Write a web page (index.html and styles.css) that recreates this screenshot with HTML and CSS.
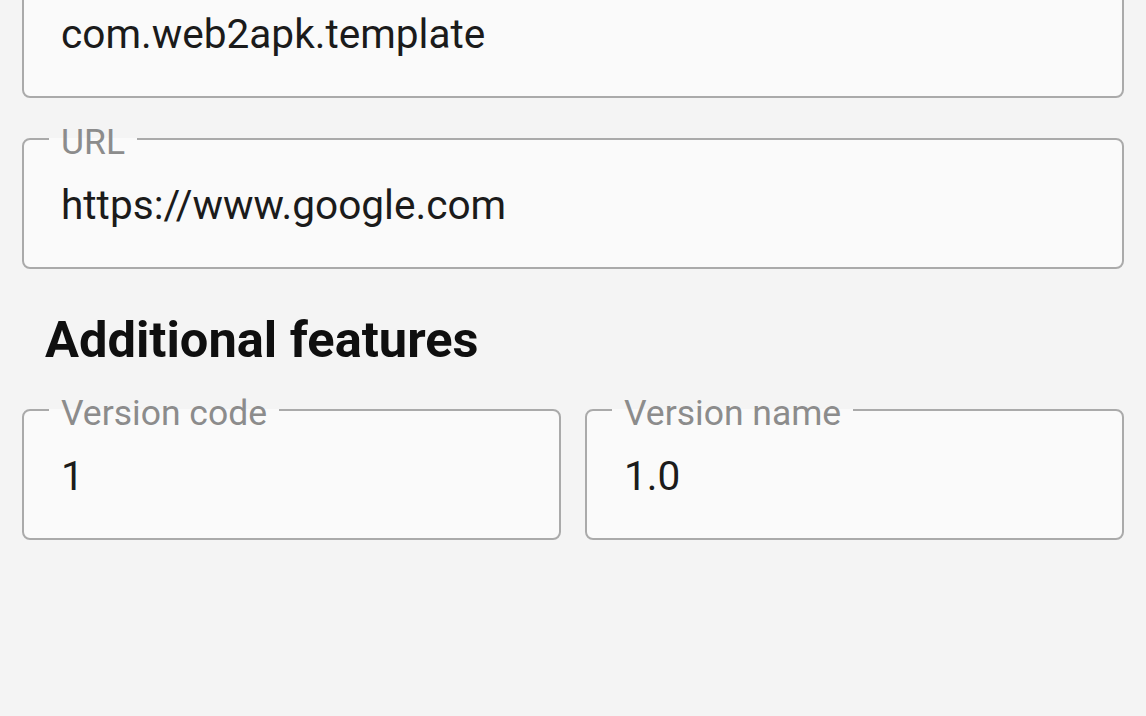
FILE: index.html
```html
<!DOCTYPE html>
<html>
<head>
<meta charset="utf-8">
<link rel="stylesheet" href="styles.css">
</head>
<body>
<main class="form">
  <fieldset class="field field-first">
    <div class="field-value">com.web2apk.template</div>
  </fieldset>
  <fieldset class="field">
    <legend class="field-label">URL</legend>
    <div class="field-value">https://www.google.com</div>
  </fieldset>
  <h2 class="section-title">Additional features</h2>
  <div class="row">
    <fieldset class="field">
      <legend class="field-label">Version code</legend>
      <div class="field-value">1</div>
    </fieldset>
    <fieldset class="field">
      <legend class="field-label">Version name</legend>
      <div class="field-value">1.0</div>
    </fieldset>
  </div>
</main>
</body>
</html>
```

FILE: styles.css
```css
html, body {
  margin: 0;
  padding: 0;
  background: #f4f4f4;
  font-family: Roboto, "Liberation Sans", sans-serif;
  overflow: hidden;
}

.form {
  display: flex;
  flex-direction: column;
  padding: 0 22px;
}

.field {
  margin: 0;
  min-width: 0;
  border: 2.5px solid #aaaaaa;
  border-radius: 8px;
  background: #fafafa;
  padding: 25px 37px 41.5px;
}

.field-first {
  margin-top: -13px;
  margin-bottom: 20.5px;
}

.field-label {
  font-size: 35.5px;
  line-height: 35.5px;
  color: #8c8c8c;
  padding: 6px 12px 0;
  margin-left: -12px;
}

.field-value {
  font-size: 40.6px;
  line-height: 40.6px;
  color: #1b1b1b;
}

.section-title {
  margin: 40.5px 0 20px;
  padding-left: 23px;
  font-size: 50.6px;
  line-height: 60px;
  font-weight: 700;
  color: #0f0f0f;
}

.row {
  display: grid;
  grid-template-columns: 1fr 1fr;
  gap: 24px;
}
```
